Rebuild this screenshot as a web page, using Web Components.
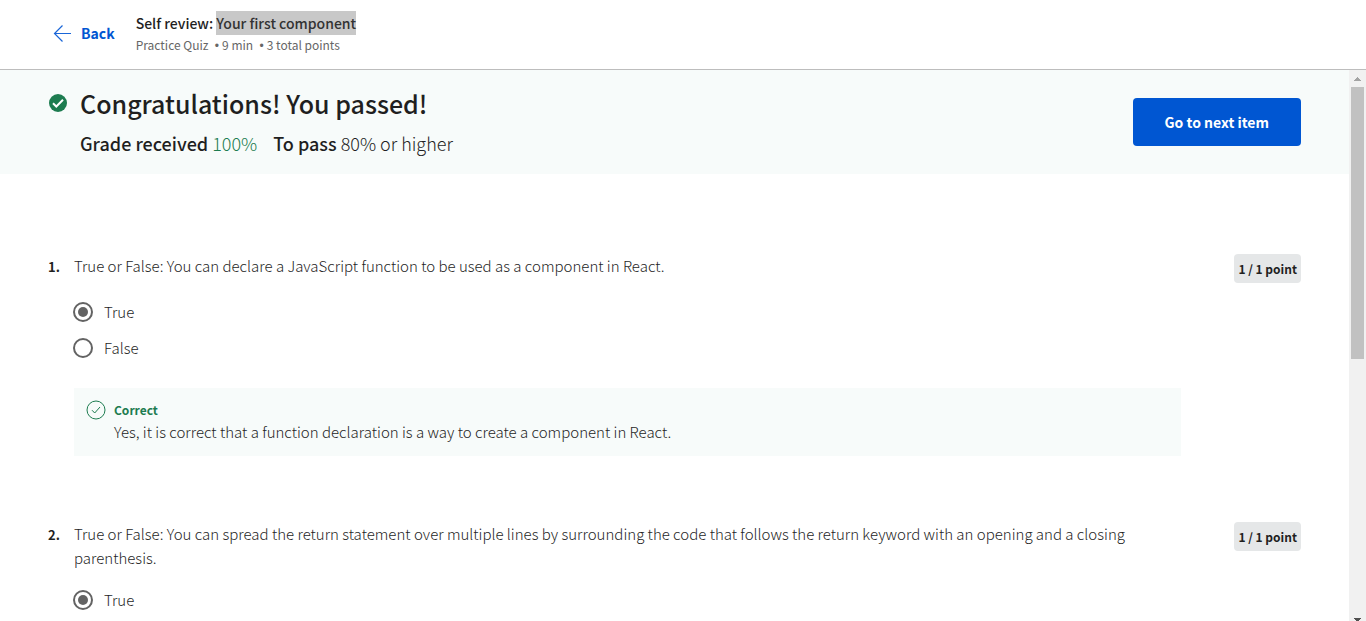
<!DOCTYPE html>
<html lang="en">
<head>
<meta charset="utf-8">
<meta name="viewport" content="width=device-width, initial-scale=1">
<title>Self review: Your first component</title>
<style>
  html, body { margin: 0; height: 100%; overflow: hidden; }
  body { font: 400 14px/24px "Noto Sans CJK SC", "Noto Sans", sans-serif; color: #1f1f1f; background: #fff; }
</style>
</head>
<body>
<quiz-page>
  <quiz-header slot="header">Self review: <text-highlight>Your first component</text-highlight>
    <span slot="meta">Practice Quiz<meta-dot></meta-dot>9 min<meta-dot></meta-dot>3 total points</span></quiz-header>
  <result-banner heading="Congratulations! You passed!" grade="100%" pass="80% or higher"></result-banner>
  <quiz-question number="1" points="1 / 1 point">
    True or False: You can declare a JavaScript function to be used as a component in React.
    <answer-option slot="answers" group="q1" label="True" checked></answer-option>
    <answer-option slot="answers" group="q1" label="False"></answer-option>
    <answer-feedback slot="feedback" heading="Correct">Yes, it is correct that a function declaration is a way to create a component in React.</answer-feedback>
  </quiz-question>
  <quiz-question number="2" points="1 / 1 point">
    True or False: You can spread the return statement over multiple lines by surrounding the code that follows the return keyword with an opening and a closing parenthesis.
    <answer-option slot="answers" group="q2" label="True" checked></answer-option>
  </quiz-question>
</quiz-page>

<script>
const define = (name, render) => customElements.define(name, class extends HTMLElement {
  connectedCallback() {
    if (this.shadowRoot) return;
    this.attachShadow({ mode: 'open' }).innerHTML = render(this);
  }
});
const attr = (el, name) => el.getAttribute(name) || '';

define('quiz-page', () => `
  <style>
    :host { display: flex; flex-direction: column; height: 100vh; overflow: hidden; }
    .body { display: flex; flex: 1; min-height: 0; }
    main { flex: 1; min-width: 0; overflow: hidden; }
  </style>
  <slot name="header"></slot>
  <div class="body"><main><slot></slot></main><page-scrollbar></page-scrollbar></div>`);

define('page-scrollbar', () => `
  <style>
    :host { display: flex; flex-direction: column; flex: none; width: 17px; height: calc(100% + 7px); background: #f1f1f1; }
    .track { flex: 1; padding: 0 2px; }
    .thumb { height: 272px; background: #c1c1c1; }
    svg { display: block; flex: none; }
  </style>
  <svg width="17" height="17" shape-rendering="crispEdges" aria-hidden="true"><path d="M8 7h1v1h1v1h1v1h1v1H5v-1h1V9h1V8h1z" fill="#a3a3a3"/></svg>
  <div class="track"><div class="thumb"></div></div>
  <svg width="17" height="17" shape-rendering="crispEdges" aria-hidden="true"><path d="M5 7h7v1h-1v1h-1v1H9v1H8v-1H7V9H6V8H5z" fill="#505050"/></svg>`);

define('text-highlight', () => `
  <style>
    :host { display: inline-block; background: #c8c8c8; color: #333; }
  </style><slot></slot>`);

define('meta-dot', () => `
  <style>
    :host { display: inline; font-family: "Liberation Sans", sans-serif; line-height: 1; padding: 0 3px; }
  </style>•`);

define('quiz-header', el => `
  <style>
    :host { display: block; flex: none; border-bottom: 1px solid #bdbdbd; background: #fff; }
    header { display: flex; align-items: center; gap: 21px; height: 69px; padding: 0 48px 0 53px; box-sizing: border-box; }
    a { display: flex; align-items: center; gap: 9px; padding-bottom: 3px; color: #0056d2; font-weight: 700; text-decoration: none; }
    a svg { fill: none; stroke: #1a66d8; stroke-width: 1.2; }
    h1 { margin: 0; font-size: 14px; line-height: 24px; font-weight: 500; }
    p { margin: 0; font-size: 12px; line-height: 20px; color: #666; }
    .titles { padding-bottom: 3px; }
  </style>
  <header>
    <a href="#back"><svg width="19" height="18" viewBox="0 0 19 18" aria-hidden="true"><path d="M18 9.5H2M9.5 1.5l-8 8 8 8"/></svg>Back</a>
    <div class="titles"><h1><slot></slot></h1><p><slot name="meta"></slot></p></div>
  </header>`);

define('result-banner', el => `
  <style>
    :host { display: flex; justify-content: space-between; align-items: center; height: 104px; padding: 0 48px; box-sizing: border-box; background: #f7fbfa; }
    .result { display: grid; grid-template-columns: 20px auto; column-gap: 12px; row-gap: 8px; align-items: center; padding-bottom: 2px; }
    h2 { margin: 0; font-size: 25px; line-height: 36px; font-weight: 500; }
    .grades { grid-column: 2; display: flex; gap: 16px; font-size: 18px; line-height: 28px; font-weight: 300; }
    b { font-weight: 500; }
    .grade { color: #1d7c50; }
    button { height: 48px; padding: 0 32px; border: 0; border-radius: 4px; background: #0056d2; color: #fff; font: inherit; font-weight: 700; cursor: pointer; }
  </style>
  <div class="result">
    <svg width="20" height="20" viewBox="0 0 20 20" aria-hidden="true"><circle cx="10" cy="10" r="9" fill="#1d7c50"/><path d="M5 10.3l3.3 3.2L15 6.8" fill="none" stroke="#fff" stroke-width="2"/></svg>
    <h2>${attr(el, 'heading')}</h2>
    <div class="grades"><span><b>Grade received</b> <span class="grade">${attr(el, 'grade')}</span></span><span><b>To pass</b> ${attr(el, 'pass')}</span></div>
  </div>
  <button type="button">Go to next item</button>`);

define('quiz-question', el => `
  <style>
    :host { display: grid; grid-template-columns: 26px 1fr 120px; margin: 80px 48px 66px; }
    :host(:not([number="1"])) { margin-top: 0; }
    .number { font-size: 13px; font-weight: 700; padding-top: 1px; }
    .prompt { padding: 0 48px 1px 0; min-height: 28px; font-size: 15px; font-weight: 300; }
    .points { justify-self: end; align-self: start; padding: 0 4px; border-radius: 4px; background: #e5e7e8; font-size: 12px; line-height: 29px; font-weight: 700; white-space: nowrap; }
    .answers { grid-column: 2; padding-top: 11px; }
    .feedback { grid-column: 2; padding-top: 22px; }
  </style>
  <div class="number">${attr(el, 'number')}.</div>
  <div class="prompt"><slot></slot></div>
  <div class="points">${attr(el, 'points')}</div>
  <div class="answers" role="radiogroup"><slot name="answers"></slot></div>
  <div class="feedback"><slot name="feedback"></slot></div>`);

define('answer-option', el => `
  <style>
    :host { display: block; font-size: 15px; font-weight: 300; }
    label { display: flex; align-items: center; gap: 11px; height: 36px; margin-left: -1px; cursor: pointer; }
    input { appearance: none; display: grid; place-content: center; box-sizing: border-box; width: 20px; height: 20px; margin: 0; border: 2px solid #636363; border-radius: 50%; background: #fff; }
    input:checked::before { content: ""; width: 10px; height: 10px; border-radius: 50%; background: #636363; }
  </style>
  <label><input type="radio" name="${attr(el, 'group')}" ${el.hasAttribute('checked') ? 'checked' : ''}><span>${attr(el, 'label')}</span></label>`);

define('answer-feedback', el => `
  <style>
    :host { display: grid; grid-template-columns: 20px 1fr; column-gap: 8px; padding: 12px; background: #f7fbfa; }
    h3 { margin: 0; font-size: 12px; line-height: 20px; font-weight: 700; color: #1d7c50; }
    p { margin: 0; grid-column: 2; font-size: 15px; font-weight: 300; }
  </style>
  <svg width="20" height="20" viewBox="0 0 20 20" fill="none" stroke="#1d7c50" aria-hidden="true"><circle cx="10" cy="10" r="9"/><path d="M6 10.2l2.7 2.8L14 7"/></svg>
  <h3>${attr(el, 'heading')}</h3>
  <p><slot></slot></p>`);
</script>
</body>
</html>
